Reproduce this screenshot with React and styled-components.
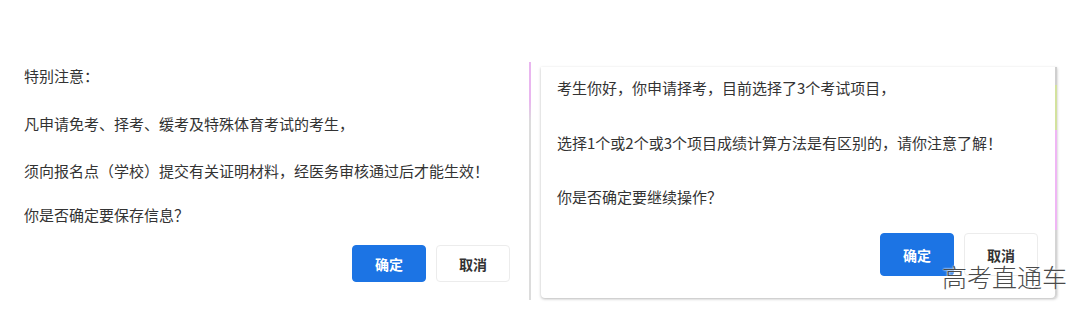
import React from 'react';
import styled, { createGlobalStyle } from 'styled-components';

const GlobalStyle = createGlobalStyle`
	html, body {
		margin: 0;
		padding: 0;
		background: #fff;
	}
	body {
		font-family: 'Noto Sans CJK SC', 'Noto Sans', sans-serif;
		color: #333;
	}
`;

const Page = styled.main`
	position: relative;
	width: 1080px;
	height: 316px;
	display: flex;
	align-items: flex-start;
	gap: 10px;
	overflow: hidden;
`;

const LeftPanel = styled.section`
	box-sizing: border-box;
	width: 531px;
	height: 238px;
	margin-top: 62px;
	padding: 4px 19px 0 24px;
	border-right: 2px solid #dcdcdc;
	border-image: linear-gradient(to bottom, #e9b6ef 0, #e9b6ef 40px, #dcdcdc 60px, #dcdcdc 100%) 1;
	display: flex;
	flex-direction: column;
`;

const RightPanel = styled.section`
	box-sizing: border-box;
	width: 516px;
	height: 231px;
	margin-top: 67px;
	padding: 11px 19px 0 16px;
	border-radius: 0 0 4px 4px;
	box-shadow: 0 1px 3px rgba(0, 0, 0, 0.28), inset -2px 0 0 #d4d4d4;
	display: flex;
	flex-direction: column;
	position: relative;
`;

const EdgeMark = styled.span`
	position: absolute;
	right: 0;
	width: 2px;
	top: ${(p) => p.top}px;
	height: ${(p) => p.h}px;
	background: ${(p) => p.color};
`;

const Line = styled.p`
	margin: 0 0 ${(p) => p.gap || 0}px;
	font-size: 15px;
	line-height: 20px;
	color: #333;
	white-space: nowrap;
`;

const Actions = styled.div`
	display: flex;
	justify-content: flex-end;
	gap: 10px;
`;

const Button = styled.button`
	box-sizing: border-box;
	width: 74px;
	height: ${(p) => p.h}px;
	border-radius: 4px;
	font-family: inherit;
	font-size: 14px;
	font-weight: 700;
	cursor: pointer;
	border: 1px solid ${(p) => (p.primary ? '#1c74e4' : '#ececec')};
	background: ${(p) => (p.primary ? '#1c74e4' : '#fff')};
	color: ${(p) => (p.primary ? '#fff' : '#333')};
`;

const Watermark = styled.div`
	position: absolute;
	left: 942px;
	top: 261px;
	font-size: 25px;
	line-height: 30px;
	font-weight: 300;
	color: #4a4a4a;
	text-shadow: 0 0 2px #fff, 0 0 2px #fff;
`;

const App = () => {
	return (
		<>
			<GlobalStyle />
			<Page>
				<LeftPanel>
					<Line gap={28}>特别注意：</Line>
					<Line gap={27}>凡申请免考、择考、缓考及特殊体育考试的考生，</Line>
					<Line gap={24}>须向报名点（学校）提交有关证明材料，经医务审核通过后才能生效！</Line>
					<Line gap={20}>你是否确定要保存信息？</Line>
					<Actions>
						<Button primary h={37}>确定</Button>
						<Button h={37}>取消</Button>
					</Actions>
				</LeftPanel>
				<RightPanel>
					<EdgeMark top={0} h={18} color='#cfcfcf' />
					<EdgeMark top={18} h={45} color='#d3e29e' />
					<EdgeMark top={63} h={100} color='#efb6f4' />
					<Line gap={35}>考生你好，你申请择考，目前选择了3个考试项目，</Line>
					<Line gap={34}>选择1个或2个或3个项目成绩计算方法是有区别的，请你注意了解！</Line>
					<Line gap={26}>你是否确定要继续操作？</Line>
					<Actions>
						<Button primary h={43}>确定</Button>
						<Button h={43}>取消</Button>
					</Actions>
				</RightPanel>
				<Watermark>高考直通车</Watermark>
			</Page>
		</>
	);
};

export default App;
